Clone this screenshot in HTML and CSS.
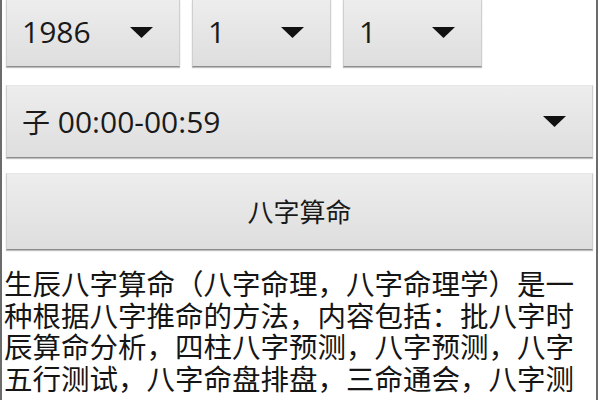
FILE: index.html
```html
<!DOCTYPE html>
<html lang="zh-CN">
<head>
<meta charset="utf-8">
<title>八字算命</title>
<link rel="stylesheet" href="styles.css">
</head>
<body>
<div class="frame">
  <div class="row-dates">
    <div class="spinner spinner-year">
      <span class="value">1986</span>
      <svg class="arrow" width="23" height="11" viewBox="0 0 23 11"><polygon points="0,0 23,0 11.5,11"/></svg>
    </div>
    <div class="spinner spinner-small">
      <span class="value">1</span>
      <svg class="arrow" width="23" height="11" viewBox="0 0 23 11"><polygon points="0,0 23,0 11.5,11"/></svg>
    </div>
    <div class="spinner spinner-small">
      <span class="value">1</span>
      <svg class="arrow" width="23" height="11" viewBox="0 0 23 11"><polygon points="0,0 23,0 11.5,11"/></svg>
    </div>
  </div>
  <div class="spinner spinner-hour">
    <span class="value"><span class="cjk">子</span> 00:00-00:59</span>
    <svg class="arrow" width="23" height="11" viewBox="0 0 23 11"><polygon points="0,0 23,0 11.5,11"/></svg>
  </div>
  <div class="button">八字算命</div>
  <p class="desc">生辰八字算命（八字命理，八字命理学）是一种根据八字推命的方法，内容包括：批八字时辰算命分析，四柱八字预测，八字预测，八字五行测试，八字命盘排盘，三命通会，八字测</p>
</div>
</body>
</html>
```

FILE: styles.css
```css
html, body {
  margin: 0;
  padding: 0;
  background: #ffffff;
  width: 600px;
  height: 400px;
  overflow: hidden;
}

.frame {
  width: 598px;
  height: 400px;
  box-sizing: border-box;
  border-left: 2px solid #6b6b6b;
  border-right: 2px solid #6b6b6b;
  padding: 0 3px 0 4px;
  overflow: hidden;
}

.row-dates {
  display: flex;
  gap: 12px;
}

.spinner, .button {
  box-sizing: border-box;
  background: linear-gradient(#ededed, #dedede);
  border: 1px solid #cfcfcf;
  border-top-color: #e6e6e6;
  border-bottom: 1px solid #8c8c8c;
  box-shadow: 0 1px 1px rgba(0, 0, 0, 0.25);
  color: #1a1a1a;
}

.spinner {
  display: flex;
  align-items: center;
  justify-content: space-between;
  padding: 0 26px 0 15px;
  font-family: "Open Sans", "Liberation Sans", "Noto Sans CJK SC", sans-serif;
  font-size: 30px;
}

.spinner .value {
  line-height: 1;
}

.spinner-year {
  width: 174px;
  height: 67px;
  border-top: none;
  padding-bottom: 3px;
}

.spinner-small {
  width: 139px;
  height: 67px;
  border-top: none;
  padding-bottom: 3px;
}

.spinner-hour {
  margin-top: 18px;
  height: 73px;
  padding-right: 26px;
}

.cjk {
  font-family: "Noto Sans CJK SC", sans-serif;
  font-size: 28px;
}

.arrow {
  display: block;
  fill: #111111;
  flex: none;
}

.spinner-year .arrow,
.spinner-small .arrow {
  margin-top: 2px;
}

.button {
  margin-top: 15px;
  height: 77px;
  display: flex;
  align-items: center;
  justify-content: center;
  font-family: "Noto Sans CJK SC", sans-serif;
  font-size: 26px;
  padding-bottom: 2px;
}

.desc {
  margin: 17px -3px 0 -3px;
  padding-left: 1px;
  font-family: "Noto Sans CJK SC", "Droid Sans Fallback", sans-serif;
  font-size: 28.5px;
  line-height: 31.5px;
  color: #151515;
}
```
